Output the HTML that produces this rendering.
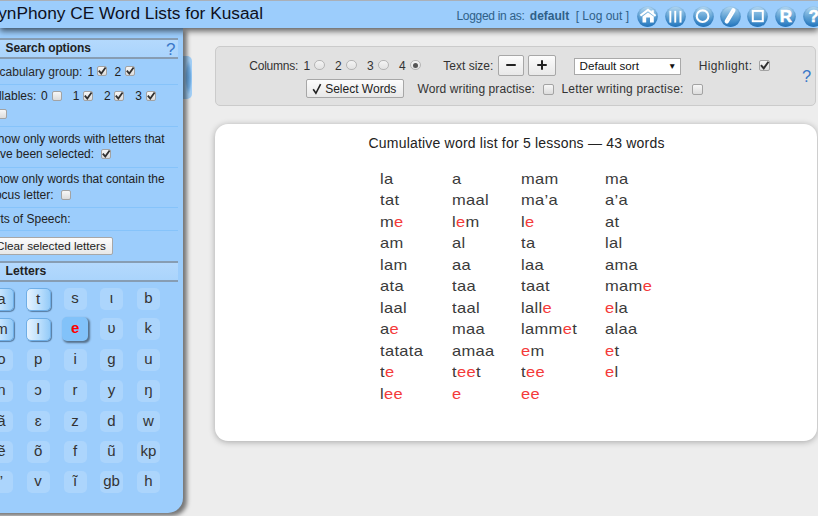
<!DOCTYPE html>
<html><head><meta charset="utf-8">
<style>
*{box-sizing:border-box}
html,body{margin:0;padding:0;width:818px;height:516px;overflow:hidden;background:#ededed;font-family:"Liberation Sans",sans-serif;color:#333}
.a{position:absolute;white-space:nowrap}
r{color:#f43a3a}
#hdr{position:absolute;left:0;top:0;width:818px;height:28px;background:#9ccdfc;border-top:1px solid #aab0b8;box-shadow:0 3px 6px rgba(0,0,0,.6);z-index:5}
#hdr .a{margin-top:-1px}
.ic{position:absolute;top:4.6px}
#panel{position:absolute;left:-20px;top:28px;width:203px;height:485px;background:#9ccdfc;border-bottom-right-radius:15px;box-shadow:4px 3px 4px rgba(0,0,0,.5);z-index:3}
#pc{position:absolute;left:0;top:0;width:183px;height:516px;z-index:4}
#tab{position:absolute;left:183px;top:55.5px;width:8.5px;height:43px;background:radial-gradient(ellipse 3.5px 17px at 5.5px 50%,#64a3dc 0%,#74b0e6 60%,#a3d0f8 100%);border-radius:0 5px 5px 0;z-index:2}
.sh{position:absolute;left:-20px;width:198px;height:20.5px;background:linear-gradient(#b4d9fd,#aad4fc);border-top:2px solid #879db3;border-bottom:2px solid #879db3}
.sep{position:absolute;left:-20px;width:198px;height:1px;background:#86c3fa}
.cb{position:absolute;border:1px solid #a3a3a3;border-radius:2px;background:linear-gradient(#f7f7f7,#dcdcdc)}
.cb.on::after{content:"";position:absolute;left:2.5px;top:0px;width:3px;height:6px;border:solid #222;border-width:0 2px 2px 0;transform:rotate(38deg)}
.tile{position:absolute;width:23px;height:21.5px;border-radius:5px;background:rgba(255,255,255,.16);font-size:15px;color:#333;text-align:center;line-height:20px}
.tile.sel{background:linear-gradient(90deg,#e6f3ff 0%,#c0e1fd 50%,#94cbf8 100%);border:1px solid #6faee6;box-shadow:1px 1px 1px rgba(40,70,100,.6);left:-1px;width:25px;height:23px;line-height:19px}
.tile.foc{background:#82c2f9;border:none;box-shadow:1.5px 1.5px 2px rgba(0,0,0,.45);color:#f00;font-weight:bold;width:26px;height:23.5px;line-height:21px}
#ctl{position:absolute;left:215px;top:46px;width:601px;height:60px;background:#e1e1e1;border:1px solid #cbcbcb;border-radius:5px}
.rd{position:absolute;width:10.5px;height:10.5px;border-radius:50%;border:1px solid #b5b5b5;background:linear-gradient(#f4f4f4,#e2e2e2)}
.rd.on::after{content:"";position:absolute;left:1.75px;top:1.75px;width:5px;height:5px;border-radius:50%;background:#555}
.btn{position:absolute;border:1px solid #a7a7a7;border-radius:2px;background:linear-gradient(#fcfcfc,#e8e8e8)}
#sel{left:574.2px;top:57.8px;width:106.6px;height:16.8px;background:#fff;border:1px solid #a9a9a9}
#words{position:absolute;left:215px;top:124px;width:601.5px;height:317px;background:#fff;border-radius:13px;box-shadow:0 1px 6px rgba(0,0,0,.3)}
</style></head><body>
<div id="hdr">
<div class="a" style="top:5.16px;font-size:17.3px;line-height:17.3px;right:555.00px;color:#0e1020;">SynPhony CE Word Lists for Kusaal</div>
<div class="a" style="top:9.54px;font-size:12px;line-height:12px;right:293.40px;color:#2f6088;letter-spacing:-0.3px;">Logged in as:</div>
<div class="a" style="top:9.54px;font-size:12px;line-height:12px;left:529.8px;color:#2f6088;font-weight:bold;">default</div>
<div class="a" style="top:9.54px;font-size:12px;line-height:12px;right:189.00px;color:#2f6088;">[ Log out ]</div>
<svg class="ic" style="left:637.1px" width="21" height="21" viewBox="0 0 21 21"><defs><linearGradient id="g" x1="0" y1="0" x2="0" y2="1"><stop offset="0" stop-color="#b5d8f2"/><stop offset=".25" stop-color="#8cbfe4"/><stop offset=".55" stop-color="#5c9fd2"/><stop offset="1" stop-color="#2378c0"/></linearGradient><radialGradient id="e" cx="50%" cy="45%" r="55%"><stop offset=".7" stop-color="#2a74b8" stop-opacity="0"/><stop offset="1" stop-color="#2a74b8" stop-opacity=".6"/></radialGradient></defs><circle cx="10.5" cy="10.6" r="10.3" fill="url(#g)"/><circle cx="10.5" cy="10.6" r="10.3" fill="url(#e)"/><path d="M3.4 9.6 L11 3.9 L18.6 9.8" stroke="#fff" stroke-width="2.1" fill="none"/><rect x="14.5" y="4.3" width="2.3" height="3.4" fill="#fff"/><path d="M5.5 10.6 L11 6.4 L16.8 10.6 V16.4 H13 V11.4 H9.2 V16.4 H5.5 Z" fill="#fff"/></svg>
<svg class="ic" style="left:665px" width="21" height="21" viewBox="0 0 21 21"><defs><linearGradient id="g" x1="0" y1="0" x2="0" y2="1"><stop offset="0" stop-color="#b5d8f2"/><stop offset=".25" stop-color="#8cbfe4"/><stop offset=".55" stop-color="#5c9fd2"/><stop offset="1" stop-color="#2378c0"/></linearGradient><radialGradient id="e" cx="50%" cy="45%" r="55%"><stop offset=".7" stop-color="#2a74b8" stop-opacity="0"/><stop offset="1" stop-color="#2a74b8" stop-opacity=".6"/></radialGradient></defs><circle cx="10.5" cy="10.6" r="10.3" fill="url(#g)"/><circle cx="10.5" cy="10.6" r="10.3" fill="url(#e)"/><rect x="4.4" y="4.8" width="1.9" height="11.8" fill="#fff"/><rect x="9.3" y="4.8" width="1.9" height="11.8" fill="#fff"/><rect x="14.5" y="4.8" width="2" height="11.8" fill="#fff"/></svg>
<svg class="ic" style="left:693.1px" width="21" height="21" viewBox="0 0 21 21"><defs><linearGradient id="g" x1="0" y1="0" x2="0" y2="1"><stop offset="0" stop-color="#b5d8f2"/><stop offset=".25" stop-color="#8cbfe4"/><stop offset=".55" stop-color="#5c9fd2"/><stop offset="1" stop-color="#2378c0"/></linearGradient><radialGradient id="e" cx="50%" cy="45%" r="55%"><stop offset=".7" stop-color="#2a74b8" stop-opacity="0"/><stop offset="1" stop-color="#2a74b8" stop-opacity=".6"/></radialGradient></defs><circle cx="10.5" cy="10.6" r="10.3" fill="url(#g)"/><circle cx="10.5" cy="10.6" r="10.3" fill="url(#e)"/><circle cx="9.6" cy="10.2" r="5.8" fill="none" stroke="#fff" stroke-width="2.1"/></svg>
<svg class="ic" style="left:720.4px" width="21" height="21" viewBox="0 0 21 21"><defs><linearGradient id="g" x1="0" y1="0" x2="0" y2="1"><stop offset="0" stop-color="#b5d8f2"/><stop offset=".25" stop-color="#8cbfe4"/><stop offset=".55" stop-color="#5c9fd2"/><stop offset="1" stop-color="#2378c0"/></linearGradient><radialGradient id="e" cx="50%" cy="45%" r="55%"><stop offset=".7" stop-color="#2a74b8" stop-opacity="0"/><stop offset="1" stop-color="#2a74b8" stop-opacity=".6"/></radialGradient></defs><circle cx="10.5" cy="10.6" r="10.3" fill="url(#g)"/><circle cx="10.5" cy="10.6" r="10.3" fill="url(#e)"/><path d="M6.8 15.4 L13.4 4.3" stroke="#fff" stroke-width="4.3" stroke-linecap="round" fill="none"/><path d="M7.4 14.3 L12.8 5.3" stroke="#e2eff9" stroke-width="1.1" stroke-dasharray="1 1.3" fill="none"/></svg>
<svg class="ic" style="left:747.3px" width="21" height="21" viewBox="0 0 21 21"><defs><linearGradient id="g" x1="0" y1="0" x2="0" y2="1"><stop offset="0" stop-color="#b5d8f2"/><stop offset=".25" stop-color="#8cbfe4"/><stop offset=".55" stop-color="#5c9fd2"/><stop offset="1" stop-color="#2378c0"/></linearGradient><radialGradient id="e" cx="50%" cy="45%" r="55%"><stop offset=".7" stop-color="#2a74b8" stop-opacity="0"/><stop offset="1" stop-color="#2a74b8" stop-opacity=".6"/></radialGradient></defs><circle cx="10.5" cy="10.6" r="10.3" fill="url(#g)"/><circle cx="10.5" cy="10.6" r="10.3" fill="url(#e)"/><rect x="5.8" y="4.9" width="10" height="10.3" fill="none" stroke="#fff" stroke-width="2"/></svg>
<svg class="ic" style="left:775.2px" width="21" height="21" viewBox="0 0 21 21"><defs><linearGradient id="g" x1="0" y1="0" x2="0" y2="1"><stop offset="0" stop-color="#b5d8f2"/><stop offset=".25" stop-color="#8cbfe4"/><stop offset=".55" stop-color="#5c9fd2"/><stop offset="1" stop-color="#2378c0"/></linearGradient><radialGradient id="e" cx="50%" cy="45%" r="55%"><stop offset=".7" stop-color="#2a74b8" stop-opacity="0"/><stop offset="1" stop-color="#2a74b8" stop-opacity=".6"/></radialGradient></defs><circle cx="10.5" cy="10.6" r="10.3" fill="url(#g)"/><circle cx="10.5" cy="10.6" r="10.3" fill="url(#e)"/><text x="10.8" y="16.2" text-anchor="middle" font-family="Liberation Sans" font-weight="bold" font-size="17" fill="#fff" stroke="#fff" stroke-width=".5">R</text></svg>
<svg class="ic" style="left:802.8px" width="21" height="21" viewBox="0 0 21 21"><defs><linearGradient id="g" x1="0" y1="0" x2="0" y2="1"><stop offset="0" stop-color="#b5d8f2"/><stop offset=".25" stop-color="#8cbfe4"/><stop offset=".55" stop-color="#5c9fd2"/><stop offset="1" stop-color="#2378c0"/></linearGradient><radialGradient id="e" cx="50%" cy="45%" r="55%"><stop offset=".7" stop-color="#2a74b8" stop-opacity="0"/><stop offset="1" stop-color="#2a74b8" stop-opacity=".6"/></radialGradient></defs><circle cx="10.5" cy="10.6" r="10.3" fill="url(#g)"/><circle cx="10.5" cy="10.6" r="10.3" fill="url(#e)"/><text x="10.8" y="16.4" text-anchor="middle" font-family="Liberation Sans" font-weight="bold" font-size="17" fill="#fff" stroke="#fff" stroke-width=".5">?</text>
</svg>
</div>
<div id="tab"></div>
<div id="panel"></div>
<div id="pc">
<div class="sh" style="top:38px"></div>
<div class="a" style="top:42.44px;font-size:12px;line-height:12px;left:5.5px;color:#222;font-weight:bold;letter-spacing:-0.1px;">Search options</div>
<div class="a" style="top:40.61px;font-size:17px;line-height:17px;left:166px;color:#3a78c9;">?</div>
<div class="a" style="top:65.84px;font-size:12px;line-height:12px;right:100.70px;color:#2a2a2a;">Vocabulary group:</div>
<div class="a" style="top:65.84px;font-size:12px;line-height:12px;left:87.5px;color:#222;">1</div>
<div class="cb" style="left:97px;top:66px;width:10px;height:10px"><svg width="10" height="10" viewBox="0 0 10 10" style="position:absolute;left:-1px;top:-1px"><path d="M1.8 4.6 L4.3 7.6 L8.6 1.6" stroke="#303030" stroke-width="1.8" fill="none"/></svg></div>
<div class="a" style="top:65.84px;font-size:12px;line-height:12px;left:114.5px;color:#222;">2</div>
<div class="cb" style="left:125px;top:66px;width:10px;height:10px"><svg width="10" height="10" viewBox="0 0 10 10" style="position:absolute;left:-1px;top:-1px"><path d="M1.8 4.6 L4.3 7.6 L8.6 1.6" stroke="#303030" stroke-width="1.8" fill="none"/></svg></div>
<div class="sep" style="top:84px"></div>
<div class="a" style="top:89.84px;font-size:12px;line-height:12px;right:146.70px;color:#222;">Syllables:</div>
<div class="a" style="top:89.84px;font-size:12px;line-height:12px;left:41px;color:#222;">0</div>
<div class="cb" style="left:52px;top:91px;width:10px;height:10px"></div>
<div class="a" style="top:89.84px;font-size:12px;line-height:12px;left:72.8px;color:#222;">1</div>
<div class="cb" style="left:82.7px;top:91px;width:10px;height:10px"><svg width="10" height="10" viewBox="0 0 10 10" style="position:absolute;left:-1px;top:-1px"><path d="M1.8 4.6 L4.3 7.6 L8.6 1.6" stroke="#303030" stroke-width="1.8" fill="none"/></svg></div>
<div class="a" style="top:89.84px;font-size:12px;line-height:12px;left:104px;color:#222;">2</div>
<div class="cb" style="left:114.2px;top:91px;width:10px;height:10px"><svg width="10" height="10" viewBox="0 0 10 10" style="position:absolute;left:-1px;top:-1px"><path d="M1.8 4.6 L4.3 7.6 L8.6 1.6" stroke="#303030" stroke-width="1.8" fill="none"/></svg></div>
<div class="a" style="top:89.84px;font-size:12px;line-height:12px;left:135.3px;color:#222;">3</div>
<div class="cb" style="left:145.6px;top:91px;width:10px;height:10px"><svg width="10" height="10" viewBox="0 0 10 10" style="position:absolute;left:-1px;top:-1px"><path d="M1.8 4.6 L4.3 7.6 L8.6 1.6" stroke="#303030" stroke-width="1.8" fill="none"/></svg></div>
<div class="cb" style="left:-3px;top:108.5px;width:10px;height:10px"></div>
<div class="sep" style="top:126px"></div>
<div class="a" style="top:132.64px;font-size:12px;line-height:12px;right:18.40px;color:#222;">Show only words with letters that</div>
<div class="a" style="top:148.44px;font-size:12px;line-height:12px;right:88.90px;color:#222;">have been selected:</div>
<div class="cb" style="left:100.8px;top:149.2px;width:10px;height:10px"><svg width="10" height="10" viewBox="0 0 10 10" style="position:absolute;left:-1px;top:-1px"><path d="M1.8 4.6 L4.3 7.6 L8.6 1.6" stroke="#303030" stroke-width="1.8" fill="none"/></svg></div>
<div class="sep" style="top:167px"></div>
<div class="a" style="top:172.64px;font-size:12px;line-height:12px;right:18.40px;color:#222;">Show only words that contain the</div>
<div class="a" style="top:188.54px;font-size:12px;line-height:12px;right:129.40px;color:#222;">Focus letter:</div>
<div class="cb" style="left:60.5px;top:190px;width:10px;height:10px"></div>
<div class="sep" style="top:207px"></div>
<div class="a" style="top:212.84px;font-size:12px;line-height:12px;right:112.50px;color:#222;">Parts of Speech:</div>
<div class="sep" style="top:229.5px"></div>
<div class="btn" style="left:-8px;top:237px;width:121px;height:18px"></div>
<div class="a" style="top:239.90px;font-size:11.7px;line-height:11.7px;left:-4px;color:#222;">Clear selected letters</div>
<div class="sh" style="top:261px;height:20.5px"></div>
<div class="a" style="top:265.37px;font-size:12.2px;line-height:12.2px;left:5.6px;color:#222;font-weight:bold;">Letters</div>
<div class="tile sel" style="left:-11px;top:287.5px"><span>a</span></div>
<div class="tile sel" style="left:25.6px;top:287.5px"><span>t</span></div>
<div class="tile" style="left:63.6px;top:288px"><span>s</span></div>
<div class="tile" style="left:100px;top:288px"><span>ι</span></div>
<div class="tile" style="left:136.8px;top:288px"><span>b</span></div>
<div class="tile sel" style="left:-11px;top:317.8px"><span>m</span></div>
<div class="tile sel" style="left:25.6px;top:317.8px"><span>l</span></div>
<div class="tile foc" style="left:62.2px;top:317.4px"><span>e</span></div>
<div class="tile" style="left:100px;top:318.3px"><span>ʋ</span></div>
<div class="tile" style="left:136.8px;top:318.3px"><span>k</span></div>
<div class="tile" style="left:-10px;top:349.2px"><span>o</span></div>
<div class="tile" style="left:26.6px;top:349.2px"><span>p</span></div>
<div class="tile" style="left:63.6px;top:349.2px"><span>i</span></div>
<div class="tile" style="left:100px;top:349.2px"><span>g</span></div>
<div class="tile" style="left:136.8px;top:349.2px"><span>u</span></div>
<div class="tile" style="left:-10px;top:380px"><span>n</span></div>
<div class="tile" style="left:26.6px;top:380px"><span>ɔ</span></div>
<div class="tile" style="left:63.6px;top:380px"><span>r</span></div>
<div class="tile" style="left:100px;top:380px"><span>y</span></div>
<div class="tile" style="left:136.8px;top:380px"><span>ŋ</span></div>
<div class="tile" style="left:-10px;top:410.5px"><span>ã</span></div>
<div class="tile" style="left:26.6px;top:410.5px"><span>ɛ</span></div>
<div class="tile" style="left:63.6px;top:410.5px"><span>z</span></div>
<div class="tile" style="left:100px;top:410.5px"><span>d</span></div>
<div class="tile" style="left:136.8px;top:410.5px"><span>w</span></div>
<div class="tile" style="left:-10px;top:441px"><span>ẽ</span></div>
<div class="tile" style="left:26.6px;top:441px"><span>õ</span></div>
<div class="tile" style="left:63.6px;top:441px"><span>f</span></div>
<div class="tile" style="left:100px;top:441px"><span>ũ</span></div>
<div class="tile" style="left:136.8px;top:441px"><span>kp</span></div>
<div class="tile" style="left:-10px;top:471.3px"><span>’</span></div>
<div class="tile" style="left:26.6px;top:471.3px"><span>v</span></div>
<div class="tile" style="left:63.6px;top:471.3px"><span>ĩ</span></div>
<div class="tile" style="left:100px;top:471.3px"><span>gb</span></div>
<div class="tile" style="left:136.8px;top:471.3px"><span>h</span></div>
</div>
<div id="ctl"></div>
<div class="a" style="top:59.84px;font-size:12px;line-height:12px;left:249.3px;color:#333;letter-spacing:-0.25px;">Columns:</div>
<div class="a" style="top:59.84px;font-size:12px;line-height:12px;left:303.5px;color:#333;">1</div>
<div class="rd" style="left:314px;top:59.8px"></div>
<div class="a" style="top:59.84px;font-size:12px;line-height:12px;left:335px;color:#333;">2</div>
<div class="rd" style="left:346px;top:59.8px"></div>
<div class="a" style="top:59.84px;font-size:12px;line-height:12px;left:367px;color:#333;">3</div>
<div class="rd" style="left:378.2px;top:59.8px"></div>
<div class="a" style="top:59.84px;font-size:12px;line-height:12px;left:399px;color:#333;">4</div>
<div class="rd on" style="left:410.2px;top:59.8px"></div>
<div class="a" style="top:59.84px;font-size:12px;line-height:12px;left:443.3px;color:#333;">Text size:</div>
<div class="btn" style="left:498px;top:55.2px;width:25.5px;height:20.5px"></div>
<div class="btn" style="left:528.3px;top:55.2px;width:27.5px;height:20.5px"></div>
<div class="a" style="left:506.3px;top:64px;width:9.5px;height:2.3px;border-radius:1px;background:#222"></div>
<div class="a" style="left:536.6px;top:64px;width:10.4px;height:2.3px;border-radius:1px;background:#222"></div>
<div class="a" style="left:540.7px;top:59.8px;width:2.3px;height:10px;border-radius:1px;background:#222"></div>
<div id="sel" class="a"></div>
<div class="a" style="top:60.48px;font-size:11.6px;line-height:11.6px;left:579.6px;color:#111;">Default sort</div>
<div class="a" style="top:62.30px;font-size:8.5px;line-height:8.5px;left:668px;color:#111;">▼</div>
<div class="a" style="top:59.64px;font-size:12px;line-height:12px;left:698.8px;color:#333;letter-spacing:0.35px;">Highlight:</div>
<div class="cb" style="left:759px;top:60px;width:11px;height:11px"><svg width="11" height="11" viewBox="0 0 10 10" style="position:absolute;left:-1px;top:-1px"><path d="M1.8 4.6 L4.3 7.6 L8.6 1.6" stroke="#303030" stroke-width="1.8" fill="none"/></svg></div>
<div class="a" style="top:67.53px;font-size:16.5px;line-height:16.5px;left:802px;color:#3a78c9;">?</div>
<div class="btn" style="left:305.5px;top:78.6px;width:98px;height:19.6px"></div>
<svg class="a" style="left:312px;top:83px" width="10" height="12" viewBox="0 0 10 12"><path d="M1.2 6.3 L3.9 10.3 L8.6 1.2" stroke="#222" stroke-width="1.6" fill="none"/></svg>
<div class="a" style="top:82.64px;font-size:12px;line-height:12px;right:421.70px;color:#222;">Select Words</div>
<div class="a" style="top:82.84px;font-size:12px;line-height:12px;left:417.5px;color:#333;letter-spacing:0.1px;">Word writing practise:</div>
<div class="cb" style="left:543px;top:83.8px;width:11px;height:11px"></div>
<div class="a" style="top:83.04px;font-size:12px;line-height:12px;left:561.4px;color:#333;letter-spacing:0.2px;">Letter writing practise:</div>
<div class="cb" style="left:692px;top:83.8px;width:11px;height:11px"></div>
<div id="words"></div>
<div class="a" style="top:136.15px;font-size:14px;line-height:14px;left:368.5px;color:#222;letter-spacing:0.2px;">Cumulative word list for 5 lessons — 43 words</div>
<div class="a" style="top:170.90px;font-size:15px;line-height:15px;left:380.3px;color:#3a3a3a;letter-spacing:0.3px;transform:scaleX(1.1);transform-origin:0 0;">la</div>
<div class="a" style="top:192.40px;font-size:15px;line-height:15px;left:380.3px;color:#3a3a3a;letter-spacing:0.3px;transform:scaleX(1.1);transform-origin:0 0;">tat</div>
<div class="a" style="top:213.90px;font-size:15px;line-height:15px;left:380.3px;color:#3a3a3a;letter-spacing:0.3px;transform:scaleX(1.1);transform-origin:0 0;">m<r>e</r></div>
<div class="a" style="top:235.40px;font-size:15px;line-height:15px;left:380.3px;color:#3a3a3a;letter-spacing:0.3px;transform:scaleX(1.1);transform-origin:0 0;">am</div>
<div class="a" style="top:256.90px;font-size:15px;line-height:15px;left:380.3px;color:#3a3a3a;letter-spacing:0.3px;transform:scaleX(1.1);transform-origin:0 0;">lam</div>
<div class="a" style="top:278.40px;font-size:15px;line-height:15px;left:380.3px;color:#3a3a3a;letter-spacing:0.3px;transform:scaleX(1.1);transform-origin:0 0;">ata</div>
<div class="a" style="top:299.90px;font-size:15px;line-height:15px;left:380.3px;color:#3a3a3a;letter-spacing:0.3px;transform:scaleX(1.1);transform-origin:0 0;">laal</div>
<div class="a" style="top:321.40px;font-size:15px;line-height:15px;left:380.3px;color:#3a3a3a;letter-spacing:0.3px;transform:scaleX(1.1);transform-origin:0 0;">a<r>e</r></div>
<div class="a" style="top:342.90px;font-size:15px;line-height:15px;left:380.3px;color:#3a3a3a;letter-spacing:0.3px;transform:scaleX(1.1);transform-origin:0 0;">tatata</div>
<div class="a" style="top:364.40px;font-size:15px;line-height:15px;left:380.3px;color:#3a3a3a;letter-spacing:0.3px;transform:scaleX(1.1);transform-origin:0 0;">t<r>e</r></div>
<div class="a" style="top:385.90px;font-size:15px;line-height:15px;left:380.3px;color:#3a3a3a;letter-spacing:0.3px;transform:scaleX(1.1);transform-origin:0 0;">l<r>ee</r></div>
<div class="a" style="top:170.90px;font-size:15px;line-height:15px;left:451.5px;color:#3a3a3a;letter-spacing:0.3px;transform:scaleX(1.1);transform-origin:0 0;">a</div>
<div class="a" style="top:192.40px;font-size:15px;line-height:15px;left:451.5px;color:#3a3a3a;letter-spacing:0.3px;transform:scaleX(1.1);transform-origin:0 0;">maal</div>
<div class="a" style="top:213.90px;font-size:15px;line-height:15px;left:451.5px;color:#3a3a3a;letter-spacing:0.3px;transform:scaleX(1.1);transform-origin:0 0;">l<r>e</r>m</div>
<div class="a" style="top:235.40px;font-size:15px;line-height:15px;left:451.5px;color:#3a3a3a;letter-spacing:0.3px;transform:scaleX(1.1);transform-origin:0 0;">al</div>
<div class="a" style="top:256.90px;font-size:15px;line-height:15px;left:451.5px;color:#3a3a3a;letter-spacing:0.3px;transform:scaleX(1.1);transform-origin:0 0;">aa</div>
<div class="a" style="top:278.40px;font-size:15px;line-height:15px;left:451.5px;color:#3a3a3a;letter-spacing:0.3px;transform:scaleX(1.1);transform-origin:0 0;">taa</div>
<div class="a" style="top:299.90px;font-size:15px;line-height:15px;left:451.5px;color:#3a3a3a;letter-spacing:0.3px;transform:scaleX(1.1);transform-origin:0 0;">taal</div>
<div class="a" style="top:321.40px;font-size:15px;line-height:15px;left:451.5px;color:#3a3a3a;letter-spacing:0.3px;transform:scaleX(1.1);transform-origin:0 0;">maa</div>
<div class="a" style="top:342.90px;font-size:15px;line-height:15px;left:451.5px;color:#3a3a3a;letter-spacing:0.3px;transform:scaleX(1.1);transform-origin:0 0;">amaa</div>
<div class="a" style="top:364.40px;font-size:15px;line-height:15px;left:451.5px;color:#3a3a3a;letter-spacing:0.3px;transform:scaleX(1.1);transform-origin:0 0;">t<r>ee</r>t</div>
<div class="a" style="top:385.90px;font-size:15px;line-height:15px;left:451.5px;color:#3a3a3a;letter-spacing:0.3px;transform:scaleX(1.1);transform-origin:0 0;"><r>e</r></div>
<div class="a" style="top:170.90px;font-size:15px;line-height:15px;left:520.8px;color:#3a3a3a;letter-spacing:0.3px;transform:scaleX(1.1);transform-origin:0 0;">mam</div>
<div class="a" style="top:192.40px;font-size:15px;line-height:15px;left:520.8px;color:#3a3a3a;letter-spacing:0.3px;transform:scaleX(1.1);transform-origin:0 0;">ma’a</div>
<div class="a" style="top:213.90px;font-size:15px;line-height:15px;left:520.8px;color:#3a3a3a;letter-spacing:0.3px;transform:scaleX(1.1);transform-origin:0 0;">l<r>e</r></div>
<div class="a" style="top:235.40px;font-size:15px;line-height:15px;left:520.8px;color:#3a3a3a;letter-spacing:0.3px;transform:scaleX(1.1);transform-origin:0 0;">ta</div>
<div class="a" style="top:256.90px;font-size:15px;line-height:15px;left:520.8px;color:#3a3a3a;letter-spacing:0.3px;transform:scaleX(1.1);transform-origin:0 0;">laa</div>
<div class="a" style="top:278.40px;font-size:15px;line-height:15px;left:520.8px;color:#3a3a3a;letter-spacing:0.3px;transform:scaleX(1.1);transform-origin:0 0;">taat</div>
<div class="a" style="top:299.90px;font-size:15px;line-height:15px;left:520.8px;color:#3a3a3a;letter-spacing:0.3px;transform:scaleX(1.1);transform-origin:0 0;">lall<r>e</r></div>
<div class="a" style="top:321.40px;font-size:15px;line-height:15px;left:520.8px;color:#3a3a3a;letter-spacing:0.3px;transform:scaleX(1.1);transform-origin:0 0;">lamm<r>e</r>t</div>
<div class="a" style="top:342.90px;font-size:15px;line-height:15px;left:520.8px;color:#3a3a3a;letter-spacing:0.3px;transform:scaleX(1.1);transform-origin:0 0;"><r>e</r>m</div>
<div class="a" style="top:364.40px;font-size:15px;line-height:15px;left:520.8px;color:#3a3a3a;letter-spacing:0.3px;transform:scaleX(1.1);transform-origin:0 0;">t<r>ee</r></div>
<div class="a" style="top:385.90px;font-size:15px;line-height:15px;left:520.8px;color:#3a3a3a;letter-spacing:0.3px;transform:scaleX(1.1);transform-origin:0 0;"><r>ee</r></div>
<div class="a" style="top:170.90px;font-size:15px;line-height:15px;left:605.4px;color:#3a3a3a;letter-spacing:0.3px;transform:scaleX(1.1);transform-origin:0 0;">ma</div>
<div class="a" style="top:192.40px;font-size:15px;line-height:15px;left:605.4px;color:#3a3a3a;letter-spacing:0.3px;transform:scaleX(1.1);transform-origin:0 0;">a’a</div>
<div class="a" style="top:213.90px;font-size:15px;line-height:15px;left:605.4px;color:#3a3a3a;letter-spacing:0.3px;transform:scaleX(1.1);transform-origin:0 0;">at</div>
<div class="a" style="top:235.40px;font-size:15px;line-height:15px;left:605.4px;color:#3a3a3a;letter-spacing:0.3px;transform:scaleX(1.1);transform-origin:0 0;">lal</div>
<div class="a" style="top:256.90px;font-size:15px;line-height:15px;left:605.4px;color:#3a3a3a;letter-spacing:0.3px;transform:scaleX(1.1);transform-origin:0 0;">ama</div>
<div class="a" style="top:278.40px;font-size:15px;line-height:15px;left:605.4px;color:#3a3a3a;letter-spacing:0.3px;transform:scaleX(1.1);transform-origin:0 0;">mam<r>e</r></div>
<div class="a" style="top:299.90px;font-size:15px;line-height:15px;left:605.4px;color:#3a3a3a;letter-spacing:0.3px;transform:scaleX(1.1);transform-origin:0 0;"><r>e</r>la</div>
<div class="a" style="top:321.40px;font-size:15px;line-height:15px;left:605.4px;color:#3a3a3a;letter-spacing:0.3px;transform:scaleX(1.1);transform-origin:0 0;">alaa</div>
<div class="a" style="top:342.90px;font-size:15px;line-height:15px;left:605.4px;color:#3a3a3a;letter-spacing:0.3px;transform:scaleX(1.1);transform-origin:0 0;"><r>e</r>t</div>
<div class="a" style="top:364.40px;font-size:15px;line-height:15px;left:605.4px;color:#3a3a3a;letter-spacing:0.3px;transform:scaleX(1.1);transform-origin:0 0;"><r>e</r>l</div>
</body></html>
